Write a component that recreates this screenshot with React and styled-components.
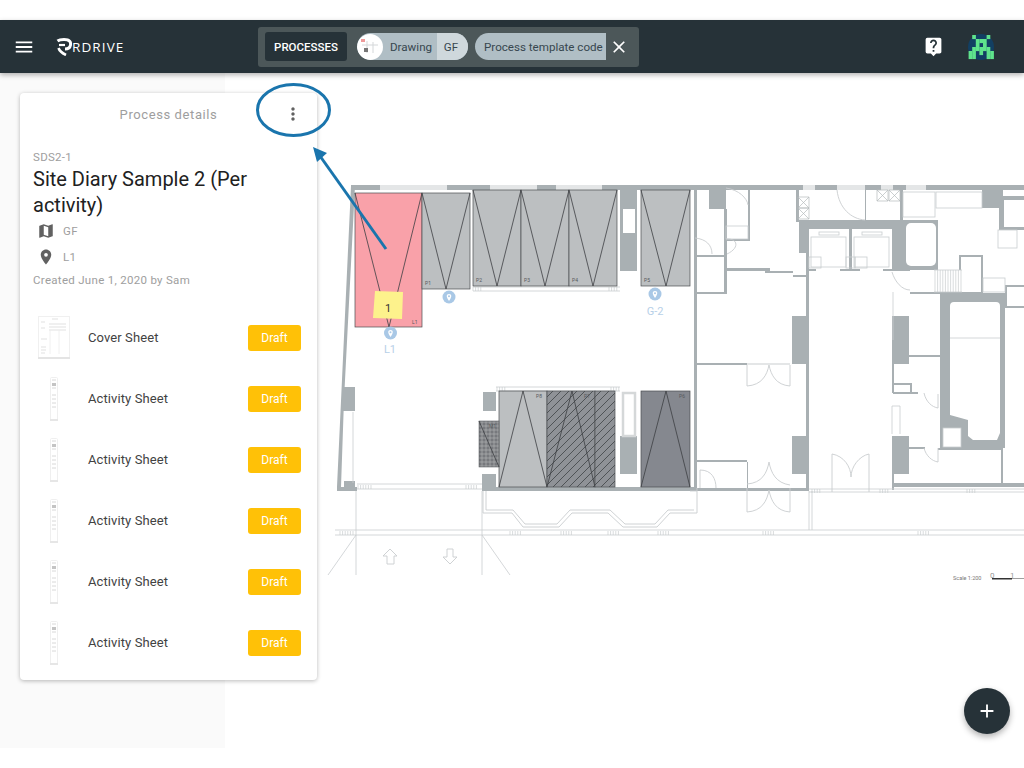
import React from "react";
import styled, { createGlobalStyle } from "styled-components";
import { MdAdd, MdClose, MdLiveHelp, MdMap, MdMenu, MdMoreVert, MdPlace } from "react-icons/md";

const GlobalStyle = createGlobalStyle`
  html, body {
    margin: 0;
    background: #fff;
  }
  body {
    font-family: Roboto, "Liberation Sans", sans-serif;
  }
`;

const Page = styled.div`
  width: 1024px;
  height: 768px;
  padding: 20px 0;
  box-sizing: border-box;
  display: flex;
  flex-direction: column;
  overflow: hidden;
`;

const Header = styled.header`
  height: 53px;
  flex-shrink: 0;
  background: #263238;
  display: flex;
  align-items: center;
  color: #fff;
  position: relative;
  z-index: 4;
  box-shadow: 0 2px 5px rgba(0, 0, 0, 0.3);
`;

const MenuButton = styled.div`
  display: flex;
  margin-left: 13px;
  font-size: 22px;
`;

const Logo = styled.div`
  display: flex;
  align-items: center;
  margin-left: 21px;
  width: 191px;
`;

const LogoText = styled.span`
  font-family: "Open Sans", sans-serif;
  font-size: 13.5px;
  letter-spacing: 1.1px;
`;

const FilterBar = styled.div`
  width: 381px;
  height: 40px;
  margin-left: 11px;
  padding: 0 7px;
  box-sizing: border-box;
  background: #4c5759;
  border-radius: 3px;
  display: flex;
  align-items: center;
`;

const BarTitle = styled.div`
  width: 82px;
  height: 29px;
  flex-shrink: 0;
  background: #263238;
  border-radius: 3px;
  font-size: 11.5px;
  font-weight: 500;
  display: flex;
  align-items: center;
  justify-content: center;
`;

const Chip = styled.div`
  height: 27px;
  width: ${(p) => p.$width}px;
  flex-shrink: 0;
  margin-left: ${(p) => p.$gap}px;
  border-radius: ${(p) => (p.$open ? "14px 0 0 14px" : "14px")};
  overflow: hidden;
  display: flex;
  align-items: center;
  background: #b0bec5;
  color: #37474f;
  font-size: 11.6px;
  white-space: nowrap;
`;

const ChipThumb = styled.div`
  width: 26px;
  height: 26px;
  flex-shrink: 0;
  background: #fff;
  border-radius: 50%;
  display: flex;
  align-items: center;
  justify-content: center;
`;

const ChipLabel = styled.span`
  flex: 1;
  padding-left: ${(p) => p.$left}px;
`;

const ChipValue = styled.span`
  height: 100%;
  width: 31px;
  padding-right: 3px;
  box-sizing: border-box;
  background: #cfd8dc;
  display: flex;
  align-items: center;
  justify-content: center;
`;

const ClearButton = styled.div`
  display: flex;
  margin-left: 3px;
  font-size: 20px;
  color: #fff;
`;

const HeaderActions = styled.div`
  margin-left: auto;
  display: flex;
  align-items: center;
  gap: 24px;
  padding-right: 30px;
  font-size: 21px;
`;

const Workspace = styled.main`
  flex: 1;
  min-height: 0;
  display: flex;
  position: relative;
`;

const Sidebar = styled.aside`
  width: 225px;
  flex-shrink: 0;
  padding: 20px;
  box-sizing: border-box;
  background: #fafafa;
`;

const Card = styled.section`
  width: 297px;
  padding-bottom: 7px;
  background: #fff;
  border-radius: 4px;
  position: relative;
  z-index: 2;
  box-shadow: 0 1px 4px rgba(0, 0, 0, 0.28);
`;

const CardHeader = styled.div`
  height: 42px;
  display: flex;
  align-items: center;
  justify-content: center;
  position: relative;
  color: #9e9e9e;
  font-size: 13px;
  letter-spacing: 0.6px;
`;

const MoreButton = styled.div`
  position: absolute;
  left: 263px;
  top: 11px;
  display: flex;
  color: #616161;
  font-size: 20px;
`;

const CardInfo = styled.div`
  padding: 14px 13px 0;
`;

const Code = styled.div`
  font-size: 11.5px;
  line-height: 16px;
  letter-spacing: 0.3px;
  color: #9e9e9e;
`;

const Title = styled.h1`
  margin: 1px 0 0;
  font-size: 20px;
  font-weight: 400;
  line-height: 26px;
  color: #212121;
`;

const MetaRow = styled.div`
  height: 26px;
  padding-left: 4px;
  display: flex;
  align-items: center;
  gap: 8px;
  font-size: 11.5px;
  letter-spacing: 0.3px;
  color: #9e9e9e;
  & > svg {
    color: #616161;
    font-size: 18px;
  }
`;

const Created = styled.div`
  margin-top: 2px;
  font-size: 11.5px;
  line-height: 16px;
  letter-spacing: 0.3px;
  color: #9e9e9e;
`;

const SheetList = styled.div`
  margin-top: 19px;
  padding: 0 16px 0 13px;
`;

const SheetRow = styled.div`
  height: 61px;
  display: flex;
  align-items: center;
`;

const SheetThumb = styled.div`
  width: 42px;
  display: flex;
  justify-content: center;
`;

const SheetName = styled.span`
  margin-left: 13px;
  font-size: 13px;
  letter-spacing: 0.1px;
  color: #424242;
`;

const DraftButton = styled.div`
  margin-left: auto;
  width: 53px;
  height: 26px;
  background: #ffc107;
  border-radius: 3px;
  color: #fff;
  font-size: 12px;
  display: flex;
  align-items: center;
  justify-content: center;
`;

const MapArea = styled.div`
  flex: 1;
  min-width: 0;
  background: #fff;
`;

const PlanSvg = styled.svg`
  display: block;
  width: 100%;
  height: 100%;
`;

const Annotation = styled.svg`
  position: absolute;
  inset: 0;
  width: 100%;
  height: 100%;
  z-index: 3;
  pointer-events: none;
`;

const Fab = styled.div`
  position: absolute;
  left: 964px;
  top: 615px;
  width: 46px;
  height: 46px;
  border-radius: 50%;
  background: #263238;
  color: #fff;
  font-size: 22px;
  display: flex;
  align-items: center;
  justify-content: center;
  z-index: 3;
  box-shadow: 0 3px 6px rgba(0, 0, 0, 0.3);
`;

const WALL = "#a9b0b3";
const LINE = "#c9cdcf";
const DARK = "#4a4d50";

// x, y, w, h
const WALLS = [
  [351, 185, 673, 5], [620, 188, 17, 83],
  [694, 190, 3, 298], [709, 190, 17, 19], [724, 209, 3, 85], [695, 292, 31, 2], [695, 255, 30, 2],
  [748, 190, 2, 50], [725, 239, 25, 2], [726, 268, 44, 3], [765, 271, 28, 2], [793, 275, 15, 2],
  [796, 190, 3, 32], [799, 220, 104, 9], [799, 220, 10, 33], [806, 253, 3, 236],
  [792, 316, 17, 48], [792, 436, 17, 38], [697, 363, 50, 2], [697, 460, 50, 2], [747, 462, 1, 26],
  [690, 488, 119, 3], [893, 483, 131, 4], [892, 316, 17, 48], [892, 436, 17, 38], [892, 340, 2, 53],
  [893, 355, 47, 2], [893, 383, 18, 2], [910, 383, 2, 10], [893, 392, 25, 2],
  [849, 229, 3, 40], [892, 220, 46, 50],
  [883, 269, 27, 2], [809, 269, 7, 2], [840, 269, 20, 2],
  [865, 190, 1, 30], [900, 190, 3, 30],
  [940, 293, 65, 155], [1001, 448, 2, 36], [938, 448, 63, 2], [908, 447, 17, 2],
  [892, 474, 2, 16],
  [959, 255, 24, 2], [959, 255, 2, 15], [981, 255, 2, 38], [910, 292, 73, 2],
  [982, 190, 21, 18], [1000, 196, 24, 4], [999, 200, 5, 30], [1004, 227, 20, 3],
  [1005, 285, 19, 2], [1005, 285, 2, 23], [1005, 306, 19, 2],
  [342, 387, 13, 24], [344, 481, 11, 6], [337, 487, 20, 4], [483, 392, 13, 19], [482, 474, 14, 14],
  [482, 487, 215, 4], [620, 436, 17, 38],
];

const LIGHT_WALLS = [
  [380, 185, 67, 5], [490, 185, 47, 5], [556, 185, 46, 5], [803, 185, 12, 5], [837, 185, 28, 5],
  [881, 185, 12, 5], [906, 185, 20, 5], [747, 363, 43, 2],
];

const THIN = [
  [473, 287, 620, 287], [473, 291, 620, 291], [496, 387, 620, 387], [496, 391, 620, 391],
  [353, 412, 353, 483], [357, 484, 482, 484], [357, 489, 482, 489], [335, 530, 1024, 530], [335, 535, 1024, 535],
  [356, 491, 356, 575], [482, 491, 482, 575], [356, 535, 328, 575], [482, 535, 510, 575],
  [809, 491, 809, 530], [812, 491, 812, 530], [809, 492, 1024, 492], [809, 489, 1024, 489],
  [690, 491, 697, 491], [893, 340, 893, 292],
  [950, 338, 1000, 338], [892, 406, 892, 434], [900, 406, 900, 434], [892, 406, 900, 406],
];

const BOXES = [
  [903, 192, 32, 25], [936, 192, 46, 16], [963, 192, 0, 16], [998, 230, 19, 18], [983, 278, 22, 14],
  [811, 237, 35, 30], [854, 237, 35, 30], [819, 232, 20, 3], [862, 232, 20, 3], [809, 257, 12, 11],
  [846, 257, 9, 11], [855, 257, 12, 11], [726, 226, 22, 13], [943, 428, 18, 19],
];

const DOOR_ARCS = [
  "M837 190 C839 208 851 219 865 220",
  "M726 188 C739 190 747 198 748 205",
  "M695 238 C706 239 712 245 712 254",
  "M726 239 C738 238 740 248 727 254",
  "M892 272 C895 282 902 290 910 290",
  "M747 365 V386 C762 385 767 375 769 365 C771 375 776 385 790 386 V365",
  "M747 488 V512 C762 511 767 501 769 490 C771 501 776 511 790 512 V488",
  "M747 484 C762 483 767 473 769 462 C771 473 776 483 790 485",
  "M832 454 V492 M832 454 C844 456 851 467 851 477 C851 467 859 456 869 454 V492",
  "M924 393 C926 402 932 407 938 408 V394",
  "M924 448 C926 456 932 461 938 462 V448",
  "M700 470 C712 470 716 479 716 488 M700 470 V488",
  "M483 491 V513 H512 L523 527 H559 L572 513 H608 L623 527 H657 L670 513 H697 V488",
  "M486 491 V510 H513 L525 524 H557 L570 510 H610 L625 524 H655 L668 510 H694",
  "M390 549 L383 556 H387 V564 H394 V556 H397 Z",
  "M450 564 L443 557 H447 V549 H453 V557 H457 Z",
];

const CROSSES = [[798, 197, 11, 11], [798, 208, 11, 11], [877, 190, 11, 11], [889, 190, 11, 11]];

const ROOMS = [
  { x: 355, y: 193, w: 67, h: 134, apex: 389, up: false, fill: "#f9a1a9", label: "L1", lx: 412, ly: 324 },
  { x: 422, y: 193, w: 48, h: 96, apex: 446, up: false, fill: "#bcbfc1", label: "P1", lx: 425, ly: 285 },
  { x: 473, y: 190, w: 48, h: 96, apex: 497, up: false, fill: "#bcbfc1", label: "P2", lx: 476, ly: 282 },
  { x: 521, y: 190, w: 48, h: 96, apex: 545, up: false, fill: "#bcbfc1", label: "P3", lx: 524, ly: 282 },
  { x: 569, y: 190, w: 48, h: 96, apex: 593, up: false, fill: "#bcbfc1", label: "P4", lx: 572, ly: 282 },
  { x: 641, y: 190, w: 49, h: 96, apex: 666, up: false, fill: "#bcbfc1", label: "P5", lx: 644, ly: 282 },
  { x: 499, y: 391, w: 48, h: 96, apex: 523, up: true, fill: "#bcbfc1", label: "P8", lx: 536, ly: 398 },
  { x: 547, y: 391, w: 48, h: 96, apex: 572, up: true, fill: "url(#hatch)", label: "P7", lx: 584, ly: 398 },
  { x: 595, y: 391, w: 20, h: 96, fill: "url(#hatch)" },
  { x: 641, y: 391, w: 49, h: 96, apex: 666, up: true, fill: "#85888f", label: "P6", lx: 679, ly: 398 },
];

const Room = ({ x, y, w, h, apex, up, fill, label, lx, ly }) => (
  <g>
    <rect x={x} y={y} width={w} height={h} fill={fill} stroke={DARK} strokeWidth="0.7" />
    {apex && (
      <path
        d={up ? `M${x} ${y + h} L${apex} ${y} L${x + w} ${y + h}` : `M${x} ${y} L${apex} ${y + h} L${x + w} ${y}`}
        fill="none"
        stroke="#3c3f42"
        strokeWidth="0.8"
      />
    )}
    {label && (
      <text x={lx} y={ly} fontSize="5" fill="#55595c" fontFamily="Roboto, sans-serif">
        {label}
      </text>
    )}
  </g>
);

const Pin = ({ x, y }) => (
  <g>
    <circle cx={x} cy={y} r="6.5" fill="#a9c8e6" />
    <path d={`M${x} ${y + 4} C${x - 3} ${y} ${x - 3} ${y - 3} ${x} ${y - 3} C${x + 3} ${y - 3} ${x + 3} ${y} ${x} ${y + 4} Z`} fill="#fff" />
    <circle cx={x} cy={y - 0.7} r="1" fill="#a9c8e6" />
  </g>
);

const PinLabel = ({ x, y, children }) => (
  <text x={x} y={y} fontSize="11" textAnchor="middle" fill="#b7d0e8" fontFamily="Roboto, sans-serif">
    {children}
  </text>
);

const Ticks = ({ x, y, n = 4, h = 4 }) => (
  <path
    d={Array.from({ length: n }, (_, i) => `M${x + i * 2.6} ${y} v${h}`).join(" ")}
    stroke={LINE}
    strokeWidth="0.7"
    fill="none"
  />
);

const TICK_ROWS = [
  [473, 287], [609, 287], [497, 387], [611, 387], [358, 485, 6], [466, 485, 5],
  [340, 531, 6], [510, 531, 5], [561, 531, 5], [608, 531, 5], [658, 531, 5], [763, 531, 5], [918, 531, 5],
  [812, 489, 4], [880, 489, 4], [967, 489, 4],
];

const FloorPlan = () => (
  <PlanSvg viewBox="225 73 799 675">
    <defs>
      <pattern id="hatch" patternUnits="userSpaceOnUse" width="8" height="8">
        <rect width="8" height="8" fill="#8f9297" />
        <path d="M-1 1 L1 -1 M0 8 L8 0 M7 9 L9 7" stroke="#3f4245" strokeWidth="0.8" />
      </pattern>
      <pattern id="grid" patternUnits="userSpaceOnUse" width="4" height="4">
        <rect width="4" height="4" fill="#77797d" />
        <path d="M0 2 H4 M2 0 V4" stroke="#b5b7b9" strokeWidth="0.6" />
      </pattern>
    </defs>

    <polygon points="351,186 355,186 344,400 341,487 337,487" fill={WALL} />
    {WALLS.map(([x, y, w, h], i) => (
      <rect key={i} x={x} y={y} width={w} height={h} fill={WALL} />
    ))}
    {LIGHT_WALLS.map(([x, y, w, h], i) => (
      <rect key={i} x={x} y={y} width={w} height={h} fill="#e4e6e7" />
    ))}
    <rect x="623" y="209" width="12" height="24" fill="#fff" />
    <rect x="623" y="393" width="12" height="43" fill="#fff" stroke="#d5d8d9" strokeWidth="2.5" />
    <rect x="906" y="223" width="30" height="43" rx="5" fill="#fff" />
    <rect x="1004" y="200" width="20" height="27" rx="5" fill="#fff" />
    <path
      d="M954 302 H996 Q1000 302 1000 306 V433 L997 440 H973 L968 436 V420 L950 415 V306 Q950 302 954 302 Z"
      fill="#fff"
    />
    <rect x="943" y="428" width="18" height="19" fill="#fff" />

    {THIN.map(([x1, y1, x2, y2], i) => (
      <line key={i} x1={x1} y1={y1} x2={x2} y2={y2} stroke={LINE} strokeWidth="0.8" />
    ))}
    {BOXES.map(([x, y, w, h], i) => (
      <rect key={i} x={x} y={y} width={w} height={h} fill="none" stroke={LINE} strokeWidth="0.8" />
    ))}
    {DOOR_ARCS.map((d) => (
      <path key={d} d={d} fill="none" stroke={LINE} strokeWidth="0.9" />
    ))}
    {CROSSES.map(([x, y, w, h], i) => (
      <path
        key={i}
        d={`M${x} ${y} h${w} v${h} h${-w} Z M${x} ${y} l${w} ${h} M${x + w} ${y} l${-w} ${h}`}
        fill="none"
        stroke="#b5babc"
        strokeWidth="0.7"
      />
    ))}
    {TICK_ROWS.map(([x, y, n], i) => (
      <Ticks key={i} x={x} y={y} n={n} />
    ))}
    <path d="M934 270 H962 M934 292 H962" stroke={LINE} strokeWidth="0.8" />
    <Ticks x={935} y={270} n={11} h={22} />

    {ROOMS.map((room) => (
      <Room key={`${room.x}-${room.y}`} {...room} />
    ))}
    <rect x="479" y="421" width="20" height="46" fill="url(#grid)" stroke={DARK} strokeWidth="0.5" />
    <path d="M479 421 L499 467" stroke="#3c3f42" strokeWidth="0.8" />
    <text x="489" y="428" fontSize="5" fill="#55595c" fontFamily="Roboto, sans-serif">M1</text>

    <polygon points="375,291 403,292 402,319 373,318" fill="#fdf28c" />
    <text x="388" y="312" fontSize="11" textAnchor="middle" fill="#333" fontFamily="Roboto, sans-serif">
      1
    </text>

    <Pin x={390.5} y={333} />
    <Pin x={449} y={297} />
    <Pin x={655} y={294} />
    <PinLabel x={390} y={353}>L1</PinLabel>
    <PinLabel x={655} y={315}>G-2</PinLabel>

    <text x="953" y="580" fontSize="5.5" fill="#777" fontFamily="Roboto, sans-serif">
      Scale 1:200
    </text>
    <text x="990" y="578" fontSize="8" fill="#999" fontFamily="Roboto, sans-serif">0</text>
    <text x="1010" y="578" fontSize="8" fill="#999" fontFamily="Roboto, sans-serif">1</text>
    <rect x="992" y="578" width="20" height="1.5" fill="#333" />
    <rect x="1012" y="578" width="12" height="0.8" fill="#888" />
  </PlanSvg>
);

const LogoMark = () => (
  <svg width="16" height="18" viewBox="0 0 16 18" fill="none" stroke="#fff" strokeWidth="3">
    <path d="M1.5 3 C3.5 1.5 5.5 1.5 8 1.5 C14 1.5 15 4.5 14.5 7 C14 10 12 11 9 11" />
    <path d="M3 7 H9" strokeWidth="2.2" />
    <path d="M2.5 10 C3.5 13 6 15 10 17" strokeWidth="2.6" />
  </svg>
);

const INVADER = [
  ".#...#.",
  "..###..",
  "..#.#..",
  ".#####.",
  "##.#.##",
  "##...##",
];

const Avatar = () => (
  <svg width="26" height="26" viewBox="0 0 26 26">
    <circle cx="13" cy="13" r="13" fill="#123f63" />
    {INVADER.map((row, y) =>
      row.split("").map((c, x) =>
        c === "#" ? <rect key={`${x}-${y}`} x={0.6 + x * 3.6} y={1 + y * 4} width="3.7" height="4.1" fill="#5fe38c" /> : null
      )
    )}
  </svg>
);

const DrawingThumb = () => (
  <svg width="20" height="18" viewBox="0 0 20 18">
    <rect x="1" y="1" width="4" height="3" fill="#ef9a9a" />
    <path d="M2 7 H18 M7 3 V15 M13 4 V15" stroke="#d4d7d9" strokeWidth="1" />
    <rect x="4" y="10" width="4" height="4" fill="#777" />
  </svg>
);

const CoverThumb = () => (
  <svg width="32" height="43" viewBox="0 0 32 43">
    <rect x="0.5" y="0.5" width="31" height="42" fill="#fff" stroke="#f0f0f0" />
    <path d="M3 6 H7 M14 3 H20 M11 8 H28 M11 11 H28 M11 14 H28 M3 12 H7 M3 23 H9 M3 31 H8 M3 34 H8 M3 37 H7" stroke="#dedede" strokeWidth="0.9" />
    <path d="M12 14 V38 M21 14 V38" stroke="#ececec" strokeWidth="0.8" />
    <rect y="41" width="32" height="2" fill="#e4e4e4" />
  </svg>
);

const ActivityThumb = () => (
  <svg width="8" height="44" viewBox="0 0 8 44">
    <rect x="0.5" y="0.5" width="7" height="43" rx="1" fill="#fff" stroke="#efefef" />
    <path d="M2 3 H6 M2 11 H6 M2 18 H6 M2 22 H6 M2 26 H6 M2 30 H6" stroke="#d8d8d8" strokeWidth="1" />
    <rect x="2" y="6" width="4" height="3" fill="#c4c4c4" />
    <rect y="42" width="8" height="2" fill="#e6e6e6" />
  </svg>
);

const SHEETS = ["Cover Sheet", "Activity Sheet", "Activity Sheet", "Activity Sheet", "Activity Sheet", "Activity Sheet"];

const App = () => {
  return (
    <>
      <GlobalStyle />
      <Page>
        <Header>
          <MenuButton>
            <MdMenu />
          </MenuButton>
          <Logo>
            <LogoMark />
            <LogoText>RDRIVE</LogoText>
          </Logo>
          <FilterBar>
            <BarTitle>PROCESSES</BarTitle>
            <Chip $gap={10} $width={111}>
              <ChipThumb>
                <DrawingThumb />
              </ChipThumb>
              <ChipLabel $left={7}>Drawing</ChipLabel>
              <ChipValue>GF</ChipValue>
            </Chip>
            <Chip $gap={7} $width={131} $open>
              <ChipLabel $left={9}>Process template code</ChipLabel>
            </Chip>
            <ClearButton>
              <MdClose />
            </ClearButton>
          </FilterBar>
          <HeaderActions>
            <MdLiveHelp />
            <Avatar />
          </HeaderActions>
        </Header>
        <Workspace>
          <Sidebar>
            <Card>
              <CardHeader>
                Process details
                <MoreButton>
                  <MdMoreVert />
                </MoreButton>
              </CardHeader>
              <CardInfo>
                <Code>SDS2-1</Code>
                <Title>Site Diary Sample 2 (Per activity)</Title>
                <MetaRow>
                  <MdMap />
                  GF
                </MetaRow>
                <MetaRow>
                  <MdPlace />
                  L1
                </MetaRow>
                <Created>Created June 1, 2020 by Sam</Created>
              </CardInfo>
              <SheetList>
                {SHEETS.map((name, i) => (
                  <SheetRow key={i}>
                    <SheetThumb>{i === 0 ? <CoverThumb /> : <ActivityThumb />}</SheetThumb>
                    <SheetName>{name}</SheetName>
                    <DraftButton>Draft</DraftButton>
                  </SheetRow>
                ))}
              </SheetList>
            </Card>
          </Sidebar>
          <MapArea>
            <FloorPlan />
          </MapArea>
          <Annotation viewBox="0 73 1024 675">
            <ellipse cx="293.5" cy="110" rx="36" ry="25.5" fill="none" stroke="#1a75ad" strokeWidth="3" />
            <line x1="386" y1="249" x2="320" y2="156" stroke="#1a75ad" strokeWidth="3" />
            <polygon points="313,147 327,153 317,162" fill="#1a75ad" />
          </Annotation>
          <Fab>
            <MdAdd />
          </Fab>
        </Workspace>
      </Page>
    </>
  );
};

export default App;
